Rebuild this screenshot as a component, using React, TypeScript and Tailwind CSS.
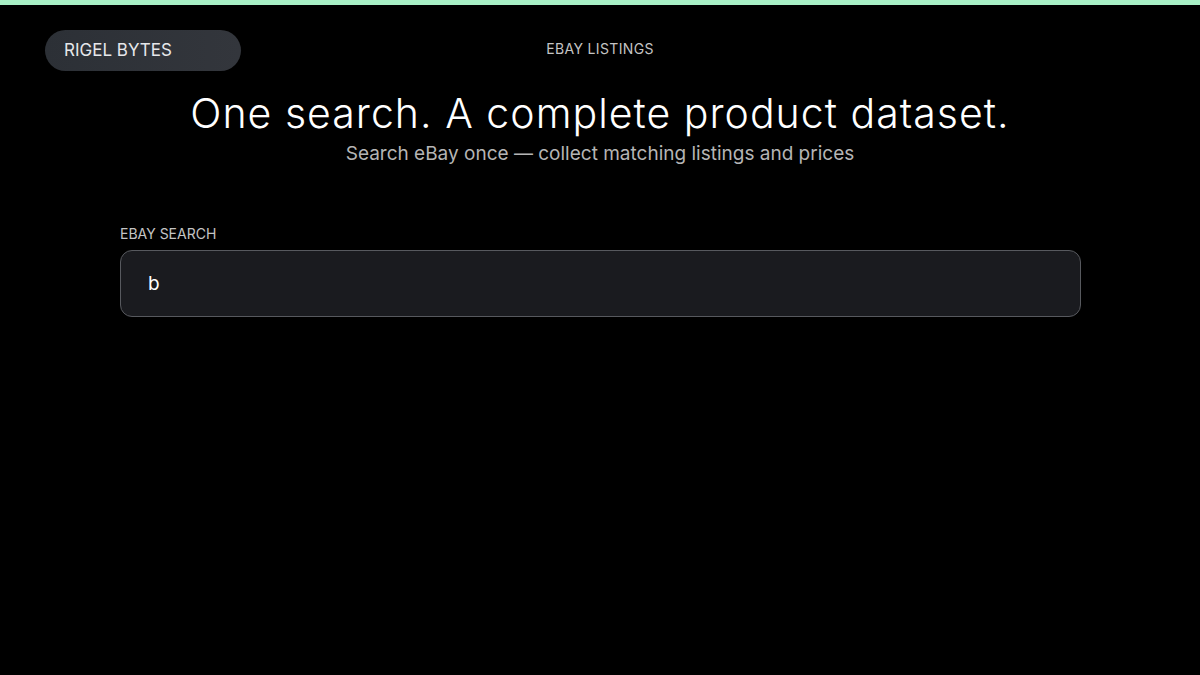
import React, { useState } from "react";

const App: React.FC = () => {
    const [query, setQuery] = useState("b");

    return (
        <div
            className="min-h-screen bg-black text-white"
            style={{ fontFamily: "Inter, 'Noto Sans', sans-serif" }}
        >
            <div className="h-[5px] bg-[#a9f0c6]" />

            <header className="relative flex h-[76px] items-center justify-center px-[45px]">
                <div className="absolute left-[45px] top-[25px] flex h-[41px] w-[196px] items-center rounded-full bg-gradient-to-r from-[#2c3036] to-[#33363c] px-[19px] text-[17px] text-[#e6e7ea]">
                    RIGEL BYTES
                </div>
                <span className="mt-[10px] text-[14px] tracking-wide text-[#c4c4c4]">
                    EBAY LISTINGS
                </span>
            </header>

            <section className="mt-[8px] flex flex-col items-center">
                <h1 className="text-[41px] font-light leading-[48px] tracking-[0.025em] text-white">
                    One search. A complete product dataset.
                </h1>
                <p className="mt-[5px] text-[19px] leading-[24px] text-[#b5b5b5]">
                    Search eBay once — collect matching listings and prices
                </p>
            </section>

            <section className="mx-[120px] mt-[59px]">
                <label className="block text-[14px] leading-[18px] text-[#c4c4c4]">
                    EBAY SEARCH
                </label>
                <input
                    value={query}
                    onChange={(e) => setQuery(e.target.value)}
                    className="mt-[7px] h-[67px] w-[961px] rounded-[12px] border border-[#57595e] bg-[#1a1b1f] px-[27px] text-[19px] text-white outline-none"
                />
            </section>
        </div>
    );
};

export default App;
